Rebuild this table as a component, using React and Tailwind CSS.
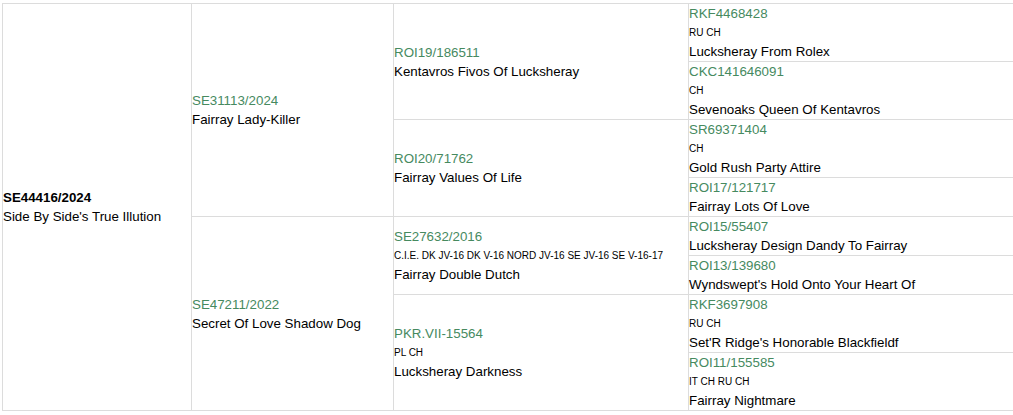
// Pedigree table
const green = 'text-[#468a5f]';

const Dog = ({ reg, title, name, bold }) => (
  <div>
    {bold ? (
      <div className="font-bold text-black">{reg}</div>
    ) : (
      <div className={green}>{reg}</div>
    )}
    {title && <div className="text-[10px] text-black">{title}</div>}
    <div className="text-black">{name}</div>
  </div>
);

const cell = 'border border-[#dcdcdc] p-0 align-middle';
const last = 'border-y border-l border-[#dcdcdc] p-0 align-top';

const ancestors = [
  { reg: 'RKF4468428', title: 'RU CH', name: 'Lucksheray From Rolex' },
  { reg: 'CKC141646091', title: 'CH', name: 'Sevenoaks Queen Of Kentavros' },
  { reg: 'SR69371404', title: 'CH', name: 'Gold Rush Party Attire' },
  { reg: 'ROI17/121717', name: 'Fairray Lots Of Love' },
  { reg: 'ROI15/55407', name: 'Lucksheray Design Dandy To Fairray' },
  { reg: 'ROI13/139680', name: "Wyndswept's Hold Onto Your Heart Of" },
  { reg: 'RKF3697908', title: 'RU CH', name: "Set'R Ridge's Honorable Blackfieldf" },
  { reg: 'ROI11/155585', title: 'IT CH RU CH', name: 'Fairray Nightmare' },
];

const grandparents = [
  { reg: 'ROI19/186511', name: 'Kentavros Fivos Of Lucksheray' },
  { reg: 'ROI20/71762', name: 'Fairray Values Of Life' },
  {
    reg: 'SE27632/2016',
    title: 'C.I.E. DK JV-16 DK V-16 NORD JV-16 SE JV-16 SE V-16-17',
    name: 'Fairray Double Dutch',
  },
  { reg: 'PKR.VII-15564', title: 'PL CH', name: 'Lucksheray Darkness' },
];

const parents = [
  { reg: 'SE31113/2024', name: 'Fairray Lady-Killer' },
  { reg: 'SE47211/2022', name: 'Secret Of Love Shadow Dog' },
];

export default function App() {
  return (
    <div className="bg-white min-h-[415px] pt-[3px] pl-[2px] font-['Liberation_Sans',Arial,sans-serif] text-[13.33px] leading-[19px]">
      <table className="border-collapse table-fixed w-[1011px]">
        <colgroup>
          <col className="w-[189px]" />
          <col className="w-[202px]" />
          <col className="w-[295px]" />
          <col />
        </colgroup>
        <tbody>
          {ancestors.map((a, i) => (
            <tr key={a.reg}>
              {i === 0 && (
                <td rowSpan={8} className={cell}>
                  <Dog bold reg="SE44416/2024" name="Side By Side's True Illution" />
                </td>
              )}
              {i % 4 === 0 && (
                <td rowSpan={4} className={cell}>
                  <Dog {...parents[i / 4]} />
                </td>
              )}
              {i % 2 === 0 && (
                <td rowSpan={2} className={cell}>
                  <Dog {...grandparents[i / 2]} />
                </td>
              )}
              <td className={last}>
                <Dog {...a} />
              </td>
            </tr>
          ))}
        </tbody>
      </table>
    </div>
  );
}
